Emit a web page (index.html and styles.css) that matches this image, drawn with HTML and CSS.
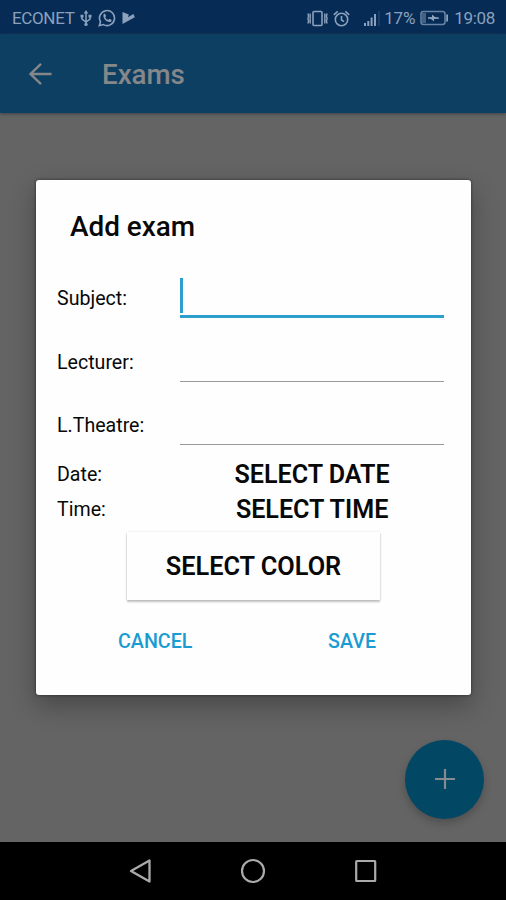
FILE: index.html
```html
<!DOCTYPE html>
<html lang="en">
<head>
<meta charset="utf-8">
<title>Exams</title>
<link rel="stylesheet" href="styles.css">
</head>
<body>
<div class="screen">
  <header class="status">
    <span class="carrier">ECONET</span>
    <svg class="usb" width="12" height="17" viewBox="0 0 12 17" fill="none" stroke="currentColor" stroke-width="1.5"><path d="M6 2v12M2 6v3l4 3 4-3V6"/><path d="M6 0 8.3 3.4H3.7ZM.5 4.8h3v2.6h-3ZM8.5 4.8h3v2.6h-3Z" fill="currentColor" stroke="none"/><circle cx="6" cy="14.4" r="1.7" fill="currentColor" stroke="none"/></svg>
    <svg class="whatsapp" width="18" height="18" viewBox="0 0 18 18"><path d="M1.3 16.7 2.5 12.8A7.5 7.5 0 1 1 5.3 15.6Z" fill="none" stroke="currentColor" stroke-width="1.6"/><path d="M5.6 5.2 6.9 4.6 8.2 7 7.2 8.2C8 9.7 8.9 10.5 10.2 11l1.2-1.2 2.3 1.1-.5 1.6C9.7 14.7 4.2 9.3 5.6 5.2Z" fill="currentColor"/></svg>
    <svg class="play" width="13" height="14" viewBox="0 0 13 14"><path d="M.5 1 6.8 3.6 6 6.2 11.4 3 12.8 6.2.5 13Z" fill="currentColor"/></svg>
    <span class="spacer"></span>
    <svg class="vibrate" width="21" height="17" viewBox="0 0 21 17" fill="none" stroke="currentColor" stroke-width="1.6"><rect x="6" y="1.5" width="9" height="14" rx="1"/><path d="M3.2 3.5v10M.9 3.5 1.6 6 .9 8.5 1.6 11 .9 13.5M17.8 3.5v10M20.1 3.5 19.4 6l.7 2.5-.7 2.5.7 2.5" stroke-width="1.4"/></svg>
    <svg class="alarm" width="17" height="17" viewBox="0 0 17 17" fill="none" stroke="currentColor" stroke-width="1.6"><circle cx="8.5" cy="9.5" r="6.2"/><path d="M8.5 6v4l2.6 1.6M.8 4.8 4.7 1.3M16.2 4.8 12.3 1.3"/></svg>
    <svg class="signal" width="16" height="15" viewBox="0 0 16 15" fill="currentColor"><path d="M0 12h2v3H0ZM3.3 10h2v5h-2ZM6.6 6.5h2V15h-2ZM10 3h2v12h-2Z"/><path d="M14.3 0h1.3v15h-1.3Z" opacity=".25"/></svg>
    <span class="percent">17%</span>
    <svg class="battery" width="29" height="16" viewBox="0 0 29 16"><rect x="1" y="1.5" width="24" height="13" rx="2.5" fill="none" stroke="currentColor" stroke-width="1.5" opacity=".75"/><path d="M2 3h4v10H2Z" fill="currentColor" opacity=".45"/><path d="M26.2 4.5H28v7h-1.8ZM8 7.3 12 7V4.5l3 2.5 4 .5v1.2L14 9v2.5L11 9 8 8.7Z" fill="currentColor"/></svg>
    <span class="clock">19:08</span>
  </header>
  <div class="appbar">
    <svg class="back" width="24" height="24" viewBox="0 0 24 24" fill="none" stroke="currentColor" stroke-width="2.4"><path d="M23.5 12H2.5M13 1.8 2.5 12 13 22.2"/></svg>
    <h1 class="page-title">Exams</h1>
  </div>
  <main class="content">
    <form class="dialog">
      <h2 class="dialog-title">Add exam</h2>
      <div class="field"><span class="label">Subject:</span><span class="input active"><i class="caret"></i></span></div>
      <div class="field"><span class="label">Lecturer:</span><span class="input"></span></div>
      <div class="field"><span class="label">L.Theatre:</span><span class="input"></span></div>
      <div class="pick"><span class="label">Date:</span><span class="choice">SELECT DATE</span></div>
      <div class="pick"><span class="label">Time:</span><span class="choice">SELECT TIME</span></div>
      <div class="color"><span>SELECT COLOR</span></div>
      <div class="actions"><span class="cancel">CANCEL</span><span class="save">SAVE</span></div>
    </form>
    <div class="fab"><svg width="22" height="22" viewBox="0 0 22 22" stroke="currentColor" stroke-width="2.2"><path d="M11 1v20M1 11h20"/></svg></div>
  </main>
  <nav class="navbar">
    <svg width="24" height="26" viewBox="0 0 24 26" fill="none" stroke="currentColor" stroke-width="2.3" stroke-linejoin="round"><path d="M21.5 2.5v21L3 13Z"/></svg>
    <svg width="26" height="26" viewBox="0 0 26 26" fill="none" stroke="currentColor" stroke-width="2.2"><circle cx="13" cy="13" r="11"/></svg>
    <svg width="24" height="24" viewBox="0 0 24 24" fill="none" stroke="currentColor" stroke-width="2.2"><rect x="2.2" y="2" width="19" height="20" rx=".5"/></svg>
  </nav>
</div>
</body>
</html>
```
FILE: styles.css
```css
* { box-sizing: border-box; }
body { margin: 0; background: #646464; font-family: Roboto, "Liberation Sans", sans-serif; color: #080808; }
.screen { width: 506px; height: 900px; display: flex; flex-direction: column; overflow: hidden; }
svg { display: block; flex: none; }
span, h1, h2 { white-space: nowrap; }
.status { height: 34px; flex: none; display: flex; align-items: center; padding: 2px 11px 0 12px; background: #062c55; color: #8ba1bd; font-size: 17px; line-height: 32px; }
.carrier { letter-spacing: -0.35px; }
.usb { margin-left: 6px; }
.whatsapp { margin-left: 6px; }
.play { margin-left: 6px; }
.spacer { flex: 1; }
.alarm { margin-left: 5px; }
.signal { margin-left: 14px; }
.percent { margin-left: 4px; letter-spacing: -0.2px; }
.battery { margin-left: 5px; }
.clock { margin-left: 5px; letter-spacing: -0.3px; }
.appbar { position: relative; height: 79px; flex: none; display: flex; align-items: center; padding-left: 28px; background: #0d3f63; color: #858789; box-shadow: 0 1px 3px #3b4348; }
.page-title { margin: 2px 0 0 50px; font-size: 27.7px; font-weight: 500; line-height: 34px; }
.content { height: 729px; flex: none; display: flex; flex-direction: column; padding: 67.3px 0 0 35.5px; }
.dialog { width: 435.7px; height: 514.5px; flex: none; display: flex; flex-direction: column; padding: 28.7px 27px 0 21.5px; background: #fefefe; border-radius: 3px; box-shadow: 0 0 3px #292929, 0 10px 26px rgba(0,0,0,.3); }
.dialog-title { margin: 0 0 22.5px 13px; font-size: 27.9px; font-weight: 500; line-height: 36px; }
.field { height: 63.5px; flex: none; display: flex; }
.label { width: 123px; flex: none; font-size: 19.6px; line-height: 24px; }
.field .label { padding-top: 19.8px; }
.input { width: 264.5px; height: 47px; margin-top: 4px; border-bottom: 1.5px solid #999; }
.input.active { padding-top: 7px; border-bottom: 3px solid #2d9fcc; }
.caret { display: block; width: 3px; height: 35px; background: #2d9fcc; }
.pick { height: 34.5px; flex: none; display: flex; align-items: center; }
.choice { width: 265px; text-align: center; font-size: 25.1px; font-weight: 600; line-height: 34px; }
.color { width: 253px; height: 68px; flex: none; margin: 5px 0 0 70px; padding-top: 1px; display: flex; align-items: center; justify-content: center; font-size: 25.3px; font-weight: 600; background: #fefefe; box-shadow: 0 2px 2px rgba(0,0,0,.23), 0 0 2px rgba(0,0,0,.12); }
.actions { display: flex; margin-top: 30px; color: #1a9cd2; font-size: 19.7px; font-weight: 500; line-height: 24px; }
.cancel { width: 210px; margin-left: 61px; }
.fab { width: 79px; height: 79px; flex: none; align-self: flex-end; margin: 45.2px 21.7px 0 0; display: flex; align-items: center; justify-content: center; color: #858b90; border-radius: 50%; background: #024764; box-shadow: 0 4px 8px rgba(0,0,0,.22); }
.navbar { height: 58px; flex: none; display: flex; align-items: center; justify-content: center; gap: 88px; background: #000; color: #aaa; }
```
